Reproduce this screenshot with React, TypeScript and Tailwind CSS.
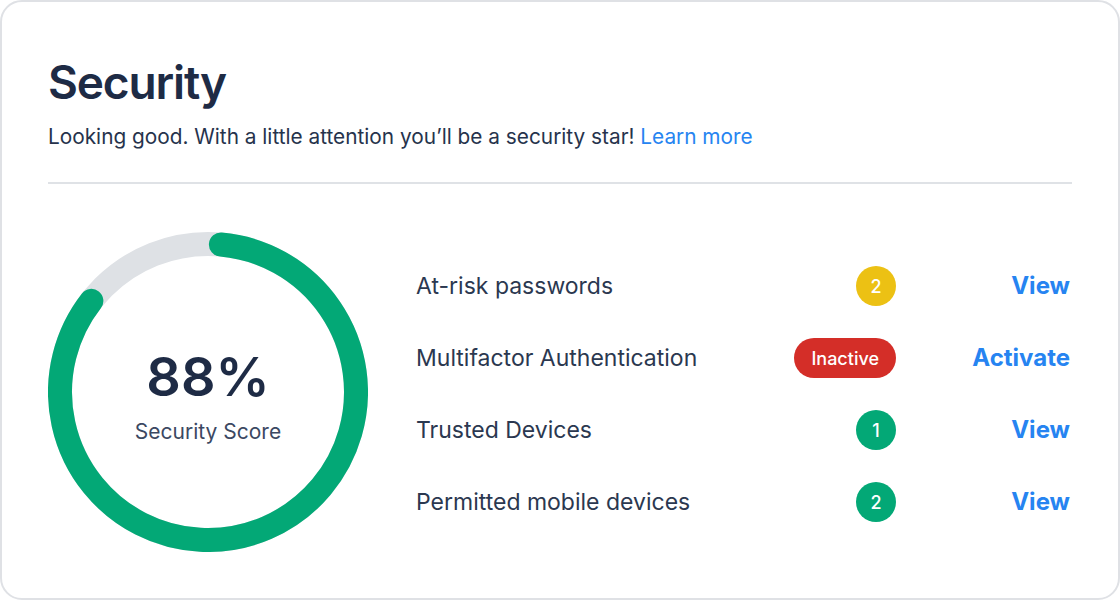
import React from "react";

interface Item {
    label: string;
    badge: string;
    tone: "yellow" | "red" | "green";
    pill?: boolean;
    action: string;
}

const items: Item[] = [
    { label: "At-risk passwords", badge: "2", tone: "yellow", action: "View" },
    {
        label: "Multifactor Authentication",
        badge: "Inactive",
        tone: "red",
        pill: true,
        action: "Activate",
    },
    { label: "Trusted Devices", badge: "1", tone: "green", action: "View" },
    { label: "Permitted mobile devices", badge: "2", tone: "green", action: "View" },
];

const toneClass = {
    yellow: "bg-[#ecc114]",
    red: "bg-[#d42e28]",
    green: "bg-[#03a876]",
};

// point on the ring, angle in degrees clockwise from 12 o'clock
function pt(cx: number, cy: number, r: number, deg: number) {
    const a = (deg * Math.PI) / 180;
    return [cx + r * Math.sin(a), cy - r * Math.cos(a)];
}

function ScoreRing() {
    const cx = 160;
    const cy = 160;
    const r = 148;
    const [sx, sy] = pt(cx, cy, r, 5);
    const [ex, ey] = pt(cx, cy, r, 308);
    return (
        <div className="relative w-[320px] h-[320px] shrink-0">
            <svg width="320" height="320" viewBox="0 0 320 320">
                <circle cx={cx} cy={cy} r={r} fill="none" stroke="#dee1e5" strokeWidth="24" />
                <path
                    d={`M ${sx} ${sy} A ${r} ${r} 0 1 1 ${ex} ${ey}`}
                    fill="none"
                    stroke="#03a876"
                    strokeWidth="24"
                    strokeLinecap="round"
                />
            </svg>
            <div className="absolute inset-0 flex flex-col items-center justify-center pt-[8px]">
                <div className="text-[54px] leading-none font-semibold text-[#1e2b45]">
                    88%
                </div>
                <div className="mt-[17px] text-[21px] leading-none text-[#3b4862]">
                    Security Score
                </div>
            </div>
        </div>
    );
}

export default function App() {
    return (
        <div
            className="w-[1120px] h-[600px] bg-white"
            style={{ fontFamily: "Inter, 'Noto Sans', sans-serif" }}
        >
            <div className="w-full h-full rounded-[22px] border-2 border-[#dfe1e5] px-[46px] pt-[52px]">
                <h1 className="text-[46px] leading-[56px] font-semibold text-[#1e2b45] tracking-tight">
                    Security
                </h1>
                <p className="mt-[13px] text-[20.8px] leading-[28px] text-[#26334c]">
                    Looking good. With a little attention you’ll be a security star!{" "}
                    <a className="text-[#2684f1]">Learn more</a>
                </p>
                <div className="mt-[31px] h-[2px] bg-[#dfe2e6] w-[1024px]" />
                <div className="mt-[48px] flex items-center w-[1022px]">
                    <ScoreRing />
                    <div className="ml-[48px] flex-1 flex flex-col gap-[32px] pt-[4px]">
                        {items.map((it) => (
                            <div key={it.label} className="flex items-center h-[40px]">
                                <div className="flex-1 text-[23px] text-[#2b3850]">{it.label}</div>
                                <div
                                    className={
                                        it.pill
                                            ? `h-[40px] px-[17px] rounded-full flex items-center text-white text-[18px] font-medium ${toneClass[it.tone]}`
                                            : `w-[40px] h-[40px] rounded-full flex items-center justify-center text-white text-[18px] font-medium ${toneClass[it.tone]}`
                                    }
                                >
                                    {it.badge}
                                </div>
                                <div className="w-[174px] text-right text-[24px] font-bold text-[#2684f1]">
                                    {it.action}
                                </div>
                            </div>
                        ))}
                    </div>
                </div>
            </div>
        </div>
    );
}
